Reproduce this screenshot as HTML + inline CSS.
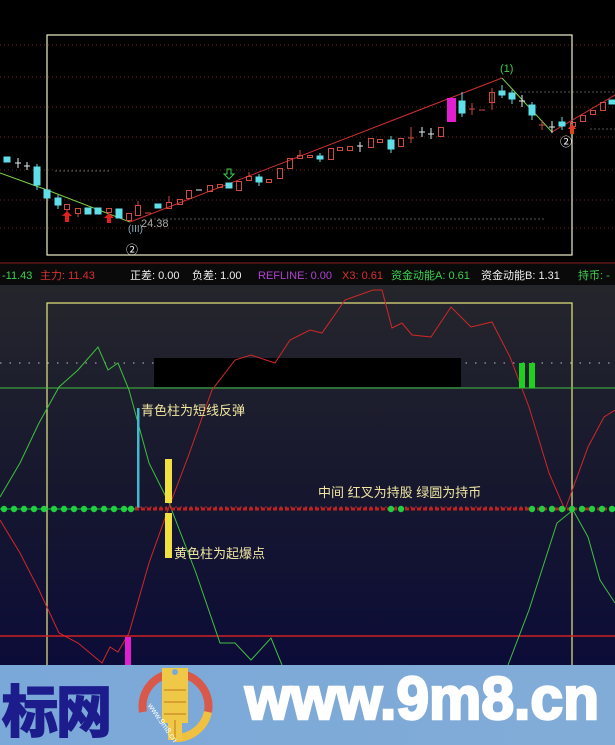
<!DOCTYPE html>
<html><head><meta charset="utf-8">
<style>
html,body{margin:0;padding:0;background:#000;}
body{width:615px;height:745px;overflow:hidden;position:relative;}
svg{display:block;position:absolute;left:0;top:0;}
.t{font-family:"Liberation Sans","Noto Sans CJK SC",sans-serif;}
</style></head><body>
<svg width="615" height="745" viewBox="0 0 615 745" xmlns="http://www.w3.org/2000/svg">
<defs>
<linearGradient id="bg2" x1="0" y1="0" x2="0" y2="1">
<stop offset="0" stop-color="#25262c"/><stop offset="0.5" stop-color="#17182e"/><stop offset="1" stop-color="#0c0c38"/>
</linearGradient>
<linearGradient id="ban" x1="0" y1="0" x2="1" y2="0">
<stop offset="0" stop-color="#7aa8d8"/><stop offset="1" stop-color="#82acd8"/>
</linearGradient>
</defs>
<rect x="0" y="0" width="615" height="262" fill="#000"/>
<g stroke="#6a2424" stroke-width="1" stroke-dasharray="1 3">
<line x1="0" y1="45" x2="615" y2="45"/><line x1="0" y1="77" x2="615" y2="77"/>
<line x1="0" y1="107" x2="615" y2="107"/><line x1="0" y1="137" x2="615" y2="137"/>
<line x1="0" y1="170" x2="615" y2="170"/><line x1="0" y1="200" x2="615" y2="200"/>
<line x1="0" y1="228" x2="615" y2="228"/>
</g>
<g stroke="#555" stroke-width="1" stroke-dasharray="2 2">
<line x1="150" y1="219" x2="545" y2="219"/><line x1="55" y1="171" x2="110" y2="171"/>
<line x1="520" y1="92" x2="615" y2="92"/><line x1="590" y1="129" x2="615" y2="129"/>
</g>
<rect x="47" y="35" width="525" height="220" fill="none" stroke="#f0f0c8" stroke-width="1.2"/>
<polyline points="0,173 47,190 130,222" fill="none" stroke="#7ed24a" stroke-width="1"/>
<polyline points="130,222 502,78" fill="none" stroke="#d03030" stroke-width="1"/>
<polyline points="502,78 552,132" fill="none" stroke="#7ed24a" stroke-width="1"/>
<polyline points="552,132 615,95" fill="none" stroke="#d03030" stroke-width="1"/>
<g stroke-width="1">
<g fill="#5fe0e8" stroke="#5fe0e8">
<rect x="4" y="157" width="6" height="5"/><rect x="34" y="167" width="6" height="18"/><line x1="37" y1="164" x2="37" y2="190"/>
<rect x="44" y="190" width="6" height="8"/><rect x="55" y="198" width="6" height="7"/><line x1="58" y1="195" x2="58" y2="209"/>
<rect x="85" y="208" width="6" height="6"/><rect x="95" y="208" width="6" height="6"/><rect x="116" y="209" width="6" height="9"/>
<rect x="155" y="204" width="6" height="4"/><rect x="226" y="183" width="6" height="5"/><rect x="256" y="177" width="6" height="5"/><line x1="259" y1="174" x2="259" y2="186"/>
<rect x="317" y="156" width="6" height="3"/><line x1="320" y1="153" x2="320" y2="162"/>
<rect x="388" y="140" width="6" height="9"/><line x1="391" y1="136" x2="391" y2="153"/>
<rect x="459" y="101" width="6" height="12"/><line x1="462" y1="92" x2="462" y2="117"/>
<rect x="499" y="91" width="6" height="4"/><line x1="502" y1="85" x2="502" y2="98"/>
<rect x="509" y="93" width="6" height="6"/><line x1="512" y1="90" x2="512" y2="104"/>
<rect x="529" y="105" width="6" height="10"/><line x1="532" y1="102" x2="532" y2="120"/>
<rect x="559" y="122" width="6" height="4"/><line x1="562" y1="117" x2="562" y2="130"/>
<rect x="609" y="100" width="6" height="4"/>
</g>
<g fill="none" stroke="#d04a40">
<rect x="64.5" y="204.5" width="5" height="5"/><line x1="67" y1="209" x2="67" y2="214"/>
<rect x="75.5" y="208.5" width="5" height="5"/><line x1="78" y1="213" x2="78" y2="217"/>
<rect x="106.5" y="208.5" width="5" height="4"/>
<rect x="126.5" y="213.5" width="5" height="7"/>
<rect x="135.5" y="205.5" width="5" height="10"/><line x1="138" y1="201" x2="138" y2="205"/>
<rect x="166.5" y="202.5" width="5" height="6"/><line x1="169" y1="196" x2="169" y2="202"/>
<rect x="177.5" y="199.5" width="5" height="5"/>
<rect x="186.5" y="190.5" width="5" height="8"/>
<rect x="207.5" y="185.5" width="5" height="6"/><rect x="217.5" y="184.5" width="5" height="3"/>
<rect x="236.5" y="181.5" width="5" height="9"/><rect x="246.5" y="176.5" width="5" height="4"/><line x1="249" y1="172" x2="249" y2="176"/>
<rect x="266.5" y="179.5" width="5" height="3"/><rect x="277.5" y="168.5" width="5" height="10"/>
<rect x="287.5" y="158.5" width="5" height="10"/><rect x="297.5" y="155.5" width="5" height="3"/><line x1="300" y1="150" x2="300" y2="155"/>
<rect x="307.5" y="155.5" width="5" height="2"/><rect x="328.5" y="148.5" width="5" height="11"/>
<rect x="337.5" y="147.5" width="5" height="3"/><rect x="347.5" y="146.5" width="5" height="4"/>
<rect x="368.5" y="138.5" width="5" height="9"/><rect x="377.5" y="139.5" width="5" height="3"/>
<rect x="398.5" y="138.5" width="5" height="8"/><rect x="438.5" y="127.5" width="5" height="9"/>
<rect x="489.5" y="92.5" width="5" height="10"/><line x1="492" y1="88" x2="492" y2="110"/>
<rect x="570.5" y="122.5" width="5" height="4"/><rect x="580.5" y="115.5" width="5" height="6"/>
<rect x="590.5" y="110.5" width="5" height="4"/><rect x="600.5" y="102.5" width="5" height="8"/>
</g>
<g stroke="#d04a40"><line x1="408" y1="138" x2="414" y2="138"/><line x1="411" y1="127" x2="411" y2="143"/>
<line x1="145" y1="213" x2="151" y2="213"/><line x1="469" y1="109" x2="475" y2="109"/><line x1="472" y1="103" x2="472" y2="115"/>
<line x1="479" y1="110" x2="485" y2="110"/><line x1="539" y1="125" x2="545" y2="125"/><line x1="542" y1="120" x2="542" y2="130"/></g>
<g stroke="#e0f0f0"><line x1="15" y1="163" x2="21" y2="163"/><line x1="18" y1="158" x2="18" y2="168"/>
<line x1="24" y1="166" x2="30" y2="166"/><line x1="27" y1="162" x2="27" y2="170"/>
<line x1="196" y1="190" x2="202" y2="190"/><line x1="357" y1="146" x2="363" y2="146"/><line x1="360" y1="142" x2="360" y2="152"/>
<line x1="419" y1="132" x2="425" y2="132"/><line x1="422" y1="127" x2="422" y2="137"/>
<line x1="428" y1="134" x2="434" y2="134"/><line x1="431" y1="128" x2="431" y2="139"/>
<line x1="519" y1="101" x2="525" y2="101"/><line x1="522" y1="95" x2="522" y2="107"/>
<line x1="549" y1="127" x2="555" y2="127"/><line x1="552" y1="121" x2="552" y2="133"/></g>
<rect x="447" y="98" width="9" height="24" fill="#e020d0"/>
</g>
<path d="M67,211 l-5,5 h3 v6 h4 v-6 h3 z" fill="#e02020"/>
<path d="M109,213 l-5,5 h3 v5 h4 v-5 h3 z" fill="#e02020"/>
<path d="M572,124 l-4,5 h2 v5 h4 v-5 h2 z" fill="#e04020"/>
<path d="M229,179 l-5,-5 h3 v-5 h4 v5 h3 z" fill="none" stroke="#3ad050" stroke-width="1"/>
<g class="t" font-size="11">
<text x="500" y="72" fill="#3ad050">(1)</text>
<text x="560" y="146" fill="#fff" font-size="12">②</text>
<text x="141" y="227" fill="#aaa">24.38</text>
<text x="128" y="232" fill="#8ab" font-size="10">(III)</text>
<text x="126" y="254" fill="#fff" font-size="12">②</text>
</g>
<rect x="0" y="262" width="615" height="23" fill="#0a0a0a"/>
<line x1="0" y1="263" x2="615" y2="263" stroke="#8a1c1c" stroke-width="1"/>
<g class="t" font-size="11">
<text x="2" y="279" fill="#3ad050">-11.43</text>
<text x="40" y="279" fill="#d83030">主力: 11.43</text>
<text x="130" y="279" fill="#eee">正差: 0.00</text>
<text x="192" y="279" fill="#eee">负差: 1.00</text>
<text x="258" y="279" fill="#b040d0">REFLINE: 0.00</text>
<text x="342" y="279" fill="#d83030">X3: 0.61</text>
<text x="391" y="279" fill="#3ad050">资金动能A: 0.61</text>
<text x="481" y="279" fill="#eee">资金动能B: 1.31</text>
<text x="578" y="279" fill="#3ad050">持币: -</text>
</g>
<rect x="0" y="285" width="615" height="380" fill="url(#bg2)"/>
<line x1="0" y1="363" x2="615" y2="363" stroke="#888" stroke-width="1.5" stroke-dasharray="1.5 8"/>
<rect x="47" y="303" width="525" height="370" fill="none" stroke="#e8e880" stroke-width="1.2"/>
<line x1="0" y1="388" x2="615" y2="388" stroke="#40c040" stroke-width="1"/>
<line x1="0" y1="636" x2="615" y2="636" stroke="#d02020" stroke-width="1.5"/>
<rect x="154" y="358" width="307" height="29" fill="#000"/>
<polyline fill="none" stroke="#40c040" stroke-width="1" points="0,497 20,463 39,423 59,387 78,370 98,347 108,370 118,363 129,390 149,463 169,503 196,573 220,643 235,643 251,660 271,638 282,665"/>
<polyline fill="none" stroke="#40c040" stroke-width="1" points="508,665 529,610 557,523 573,510 588,537 600,580 615,603"/>
<polyline fill="none" stroke="#d02828" stroke-width="1" points="0,520 20,553 39,590 59,633 78,643 102,663 110,647 118,652 129,633 149,563 169,507 188,457 212,390 235,360 251,355 275,363 290,340 310,330 322,333 345,300 373,290 382,290 392,328 402,323 412,335 431,337 451,307 471,327 492,322 510,357 529,407 549,473 565,510 588,447 604,417 615,410"/>
<rect x="519" y="363" width="6" height="25" fill="#20d020"/>
<rect x="529" y="363" width="6" height="25" fill="#20d020"/>
<rect x="137" y="408" width="2.5" height="100" fill="#40b8d0"/>
<rect x="165" y="459" width="7" height="44" fill="#f0e040"/>
<rect x="165" y="513" width="7" height="45" fill="#f0e040"/>
<rect x="125" y="637" width="6" height="28" fill="#e020d0"/>
<line x1="135" y1="509" x2="615" y2="509" stroke="#c02020" stroke-width="3" stroke-dasharray="4 2"/>
<line x1="135" y1="507" x2="530" y2="507" stroke="#a03030" stroke-width="1" stroke-dasharray="2 3"/>
<g fill="#20d040">
<circle cx="4" cy="509" r="3.2"/><circle cx="14" cy="509" r="3.2"/><circle cx="24" cy="509" r="3.2"/><circle cx="34" cy="509" r="3.2"/><circle cx="44" cy="509" r="3.2"/><circle cx="54" cy="509" r="3.2"/><circle cx="64" cy="509" r="3.2"/><circle cx="74" cy="509" r="3.2"/><circle cx="84" cy="509" r="3.2"/><circle cx="94" cy="509" r="3.2"/><circle cx="104" cy="509" r="3.2"/><circle cx="114" cy="509" r="3.2"/><circle cx="124" cy="509" r="3.2"/><circle cx="131" cy="509" r="3.2"/>
<circle cx="391" cy="509" r="3.2"/><circle cx="401" cy="509" r="3.2"/>
<circle cx="532" cy="509" r="3.2"/><circle cx="542" cy="509" r="3.2"/><circle cx="552" cy="509" r="3.2"/><circle cx="562" cy="509" r="3.2"/><circle cx="572" cy="509" r="3.2"/><circle cx="582" cy="509" r="3.2"/><circle cx="592" cy="509" r="3.2"/><circle cx="602" cy="509" r="3.2"/><circle cx="612" cy="509" r="3.2"/>
</g>
<line x1="0" y1="509" x2="135" y2="509" stroke="#20d040" stroke-width="1"/>
<g class="t" font-size="13" fill="#f0e6a0">
<text x="141" y="415">青色柱为短线反弹</text>
<text x="174" y="558">黄色柱为起爆点</text>
<text x="318" y="497">中间 红叉为持股  绿圆为持币</text>
</g>
<rect x="0" y="665" width="615" height="80" fill="url(#ban)"/>
<text x="2" y="732" class="t" font-size="56" font-weight="bold" fill="#1c1c8c" stroke="#1c1c8c" stroke-width="2" letter-spacing="-2">标网</text>
<g>
<path d="M143,712 A33,33 0 1 1 208,712" fill="none" stroke="#d8584a" stroke-width="8"/>
<path d="M208,712 A33,33 0 0 1 175,738" fill="none" stroke="#f0c040" stroke-width="8"/>
<path d="M162,668 h26 v55 h-6 v17 h-14 v-17 h-6 z" fill="#f0c848"/>
<circle cx="175" cy="672" r="3" fill="#7aa8d8"/>
<g stroke="#d8a030" stroke-width="2"><line x1="164" y1="690" x2="186" y2="690"/><line x1="164" y1="702" x2="186" y2="702"/><line x1="164" y1="714" x2="186" y2="714"/><line x1="175" y1="720" x2="175" y2="740"/></g>
<text x="140" y="710" class="t" font-size="8" fill="#fff" transform="rotate(55 148 715)">www.9m8.cn</text>
</g>
<text x="245" y="719" class="t" font-size="60" font-weight="bold" fill="#fff" stroke="#fff" stroke-width="2.5" textLength="354" lengthAdjust="spacingAndGlyphs">www.9m8.cn</text>
</svg>
</body></html>
